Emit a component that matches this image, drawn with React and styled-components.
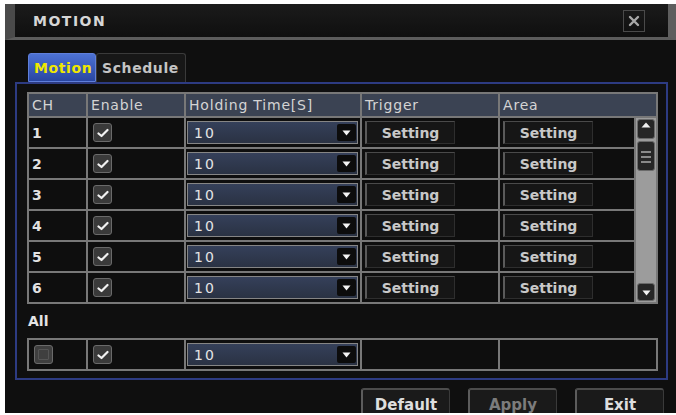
import styled, { createGlobalStyle } from "styled-components"

const GlobalStyle = createGlobalStyle`
  html, body {
    margin: 0;
    padding: 0;
    background: #fff;
  }
  body {
    font-family: "DejaVu Sans", Verdana, sans-serif;
  }
`

const Window = styled.div`
  margin: 4px 0 0 5px;
  width: 671px;
  height: 409px;
  background: #0f0f0f;
  display: flex;
  flex-direction: column;
  overflow: hidden;
`

const TitleBar = styled.div`
  flex: none;
  height: 33px;
  display: flex;
  align-items: center;
  justify-content: space-between;
  background: linear-gradient(#1b1b1b, #0f0f0f);
  border-left: 10px solid #4a4a4a;
  border-right: 8px solid #5e5e5e;
  border-bottom: 3px solid #5c5c5c;
  padding: 0 23px 0 18px;
`

const Title = styled.div`
  color: #d6d6d6;
  font-size: 14px;
  font-weight: bold;
  letter-spacing: 1.5px;
`

const CloseBox = styled.div`
  width: 20px;
  height: 20px;
  border: 1px solid #4a4a4a;
  display: flex;
  align-items: center;
  justify-content: center;
  margin-top: 1px;
`

const Body = styled.div`
  flex: 1;
  display: flex;
  flex-direction: column;
  padding: 13px 8px 0 10px;
`

const Tabs = styled.div`
  display: flex;
  margin-left: 13px;
  height: 29px;
`

const Tab = styled.div`
  box-sizing: border-box;
  width: ${(p) => p.$w}px;
  display: flex;
  align-items: center;
  padding-left: 5px;
  font-size: 14px;
  font-weight: bold;
  letter-spacing: 0.6px;
  border-radius: 3px 3px 0 0;
  ${(p) =>
    p.$active
      ? `
    background: linear-gradient(#4d72d4, #2946a2);
    border: 1px solid #5f7fda;
    color: #f0e800;
  `
      : `
    background: #171717;
    border: 1px solid #3a3a3a;
    border-bottom: none;
    color: #c4c4c4;
  `}
`

const Panel = styled.div`
  box-sizing: border-box;
  height: 298px;
  border: 2px solid #2d3b82;
  padding: 8px 9px 7px 10px;
`

const Grid = styled.div`
  display: grid;
  grid-template-columns: 57px 96px 174px 136px 134px 20px;
  grid-template-rows: ${(p) => p.$rows};
  gap: 2px;
  padding: 2px;
  background: #787878;
  width: max-content;
`

const Cell = styled.div`
  background: ${(p) => (p.$head ? "#3b4353" : "#0e0e0e")};
  color: ${(p) => (p.$head ? "#d4d4d4" : "#e2e2e2")};
  font-size: 14px;
  font-weight: ${(p) => (p.$head ? "normal" : "bold")};
  letter-spacing: ${(p) => (p.$head ? "0.8px" : "0")};
  display: flex;
  align-items: center;
  padding-left: ${(p) => p.$pad ?? 3}px;
  grid-column: ${(p) => p.$span || "auto"};
`

const Check = styled.div`
  width: 19px;
  height: 19px;
  box-sizing: border-box;
  border-radius: 3px;
  border: 1px solid #6a6a6a;
  background: ${(p) => (p.$off ? "#3f3f3f" : "#3a3a3a")};
  display: flex;
  align-items: center;
  justify-content: center;
`

const OffMark = styled.div`
  width: 9px;
  height: 9px;
  border: 1px solid #555;
  border-radius: 1px;
`

const Select = styled.div`
  box-sizing: border-box;
  width: 171px;
  height: 23px;
  margin-left: -2px;
  border: 1.5px solid #858585;
  background: linear-gradient(#35405a, #2a3243);
  display: flex;
  align-items: center;
  justify-content: space-between;
  padding: 0 1px 0 6px;
  color: #e4e4e4;
  font-size: 14px;
  font-weight: normal;
  letter-spacing: 2px;
`

const Arrow = styled.div`
  width: 19px;
  height: 17px;
  background: #0c0c0c;
  border-radius: 2px;
  display: flex;
  align-items: center;
  justify-content: center;
`

const SetButton = styled.div`
  box-sizing: border-box;
  width: 90px;
  height: 23px;
  background: #161616;
  border: 1px solid #2e2e2e;
  border-top-color: #4a4a4a;
  border-left: 2px solid #5a5a5a;
  display: flex;
  align-items: center;
  justify-content: center;
  color: #c8c8c8;
  font-size: 14px;
  font-weight: bold;
`

const Scroll = styled.div`
  grid-column: 6;
  grid-row: 2 / span 6;
  background: #9c9c9c;
  display: flex;
  flex-direction: column;
  align-items: center;
  padding: 0 1px 1px;
`

const ScrollBtn = styled.div`
  box-sizing: border-box;
  width: 18px;
  height: ${(p) => p.$h}px;
  margin-top: ${(p) => p.$mt || 0}px;
  background: #262626;
  border: 1px solid #6a6a6a;
  border-radius: 3px;
  display: flex;
  flex-direction: column;
  align-items: center;
  justify-content: ${(p) => p.$justify || "center"};
  gap: 3px;
  padding-top: 2px;
`

const Line = styled.div`
  width: 10px;
  height: 2px;
  background: #8a8a8a;
`

const Spacer = styled.div`
  flex: 1;
`

const AllLabel = styled.div`
  height: 34px;
  box-sizing: border-box;
  padding: 9px 0 0 1px;
  color: #e4e4e4;
  font-size: 14px;
  font-weight: bold;
`

const Footer = styled.div`
  display: flex;
  justify-content: flex-end;
  gap: 18px;
  padding: 8px 4px 0 0;
`

const Button = styled.div`
  box-sizing: border-box;
  width: 89px;
  height: 32px;
  background: #1a1a1a;
  border: 1px solid #3a3a3a;
  border-top: 2px solid #4c4c4c;
  border-left: 2px solid #5c5c5c;
  border-radius: 3px;
  display: flex;
  align-items: center;
  justify-content: center;
  font-size: 15px;
  font-weight: bold;
  color: ${(p) => (p.$disabled ? "#7c7c7c" : "#dedede")};
`

function CheckMark() {
  return (
    <svg width="12" height="10" viewBox="0 0 12 10">
      <path d="M1.5 5.5 L4.5 8 L10.5 2" fill="none" stroke="#f2f2f2" strokeWidth="2.2" strokeLinecap="round" strokeLinejoin="round" />
    </svg>
  )
}

function DownTri({ color = "#f4f4f4" }) {
  return (
    <svg width="9" height="6" viewBox="0 0 9 6">
      <path d="M0.5 0.5 H8.5 L4.5 5.5 Z" fill={color} />
    </svg>
  )
}

function Dropdown() {
  return (
    <Select>
      10
      <Arrow>
        <DownTri />
      </Arrow>
    </Select>
  )
}

const rows = [1, 2, 3, 4, 5, 6]

export default function App() {
  return (
    <>
      <GlobalStyle />
      <Window>
        <TitleBar>
          <Title>MOTION</Title>
          <CloseBox>
            <svg width="12" height="12" viewBox="0 0 12 12">
              <path d="M2 2 L10 10 M10 2 L2 10" stroke="#a8a8a8" strokeWidth="2.4" strokeLinecap="round" />
            </svg>
          </CloseBox>
        </TitleBar>
        <Body>
          <Tabs>
            <Tab $w={68} $active>Motion</Tab>
            <Tab $w={90}>Schedule</Tab>
          </Tabs>
          <Panel>
            <Grid $rows="22px repeat(6, 29px)">
              <Cell $head>CH</Cell>
              <Cell $head>Enable</Cell>
              <Cell $head>Holding Time[S]</Cell>
              <Cell $head>Trigger</Cell>
              <Cell $head $span="span 2">Area</Cell>
              {rows.map((n) => (
                <Row key={n} n={n} />
              ))}
              <Scroll>
                <ScrollBtn $h={20} $mt={1} $justify="flex-start">
                  <svg width="10" height="6" viewBox="0 0 10 6">
                    <path d="M0.5 5.5 H9.5 L5 0.5 Z" fill="#f0f0f0" />
                  </svg>
                </ScrollBtn>
                <ScrollBtn $h={30} $mt={2} $justify="center">
                  <Line />
                  <Line />
                  <Line />
                </ScrollBtn>
                <Spacer />
                <ScrollBtn $h={18}>
                  <DownTri />
                </ScrollBtn>
              </Scroll>
            </Grid>
            <AllLabel>All</AllLabel>
            <Grid $rows="29px">
              <Cell $pad={5}>
                <Check $off>
                  <OffMark />
                </Check>
              </Cell>
              <Cell $pad={5}>
                <Check>
                  <CheckMark />
                </Check>
              </Cell>
              <Cell>
                <Dropdown />
              </Cell>
              <Cell />
              <Cell $span="span 2" />
            </Grid>
          </Panel>
          <Footer>
            <Button>Default</Button>
            <Button $disabled>Apply</Button>
            <Button>Exit</Button>
          </Footer>
        </Body>
      </Window>
    </>
  )
}

function Row({ n }) {
  return (
    <>
      <Cell>{n}</Cell>
      <Cell $pad={5}>
        <Check>
          <CheckMark />
        </Check>
      </Cell>
      <Cell>
        <Dropdown />
      </Cell>
      <Cell>
        <SetButton>Setting</SetButton>
      </Cell>
      <Cell>
        <SetButton>Setting</SetButton>
      </Cell>
    </>
  )
}
